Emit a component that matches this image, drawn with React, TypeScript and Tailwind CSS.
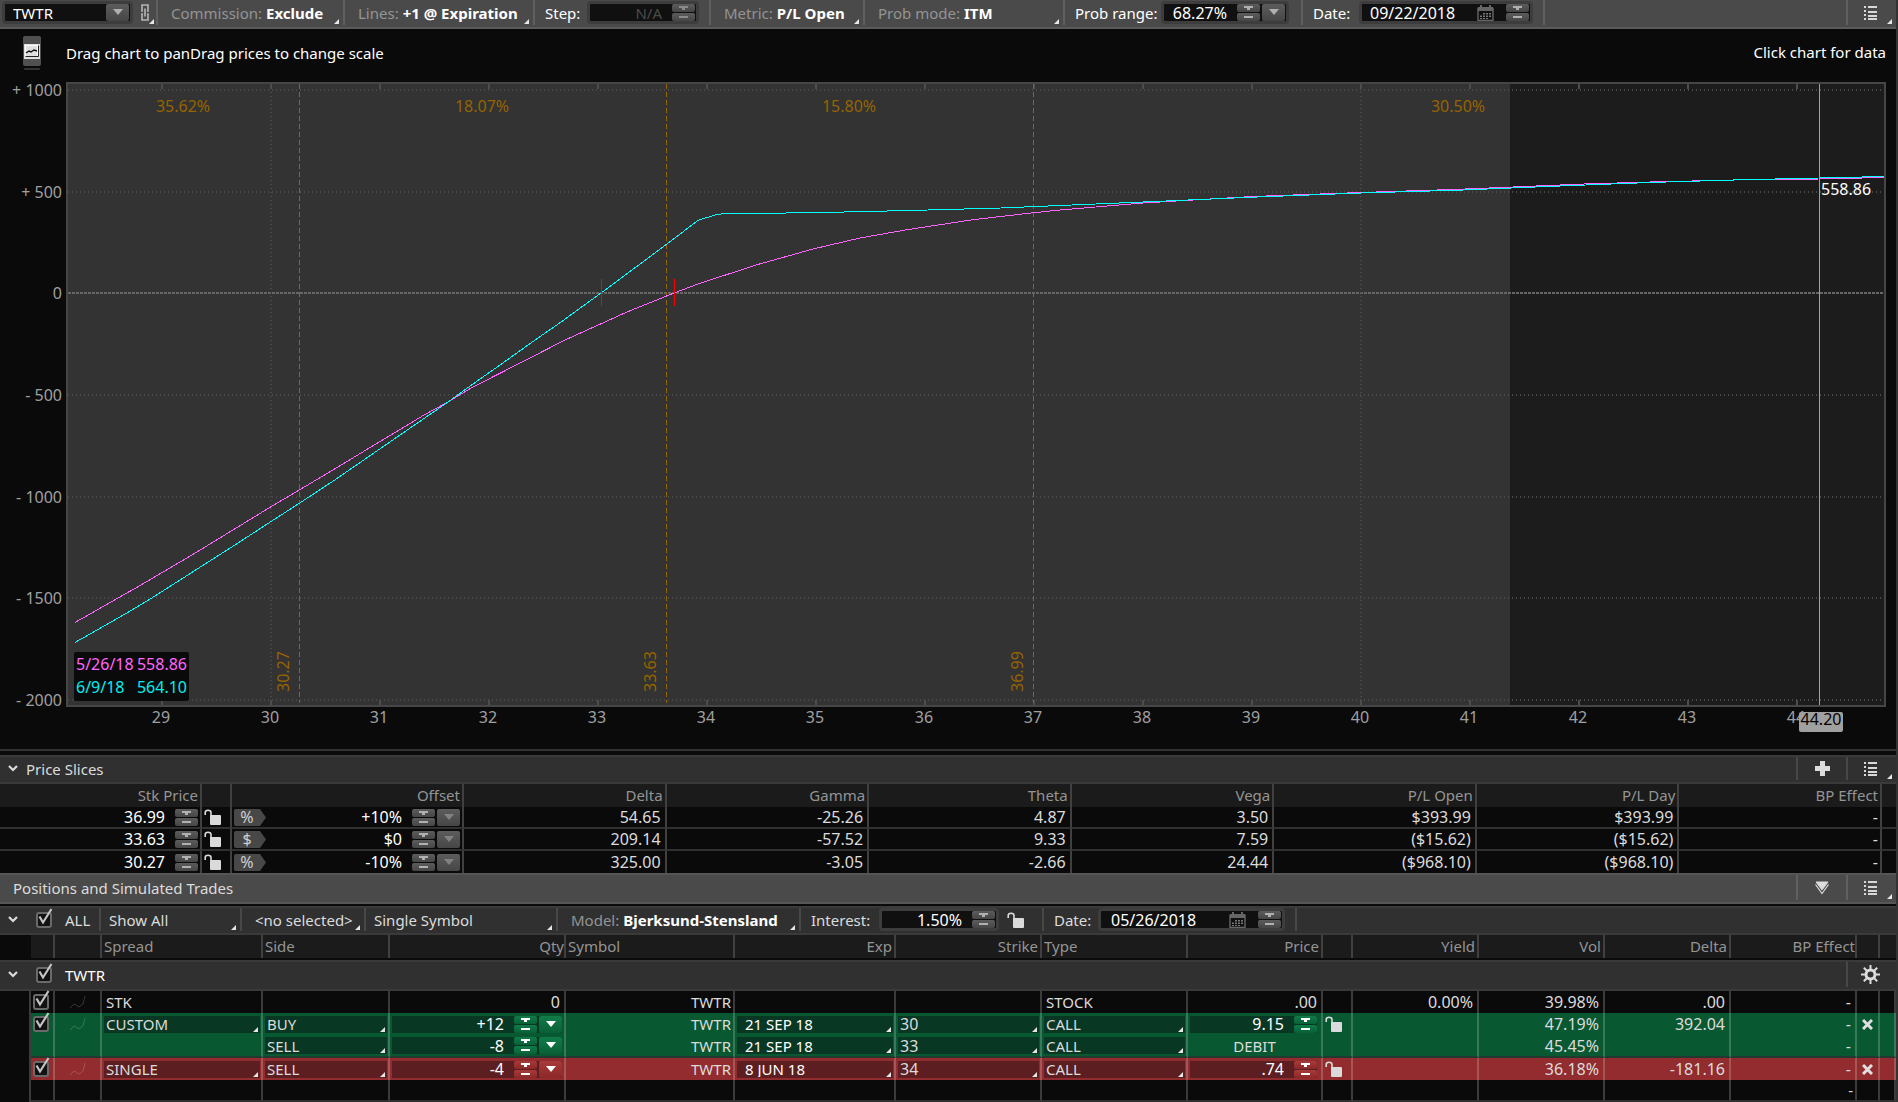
import type { ReactNode } from "react";
import clsx from "clsx";

type Tone = "gray" | "green" | "red";

const strip: Record<Tone, string> = {
  gray: "bg-gradient-to-b from-[#5c5c5c] to-[#464646] text-[#b0b0b0]",
  green: "bg-gradient-to-b from-[#107c48] to-[#0a6038] text-white",
  red: "bg-gradient-to-b from-[#a83a3a] to-[#8c2828] text-white",
};

const Spinner = ({ label, tone = "gray", dim = false }: { label: string; tone?: Tone; dim?: boolean }) => (
  <span className="flex w-[23px] shrink-0 flex-col gap-px">
    <button type="button" aria-label={`Increase ${label}`} className={`flex h-2 justify-center rounded-[2px] ${strip[tone]}`}>
      <svg width="9" height="8" viewBox="0 0 9 8" fill="currentColor" shapeRendering="crispEdges" className={clsx(dim && "opacity-60")}>
        <path d="M0 2h9v2H6v2H3V4H0z" />
      </svg>
    </button>
    <button type="button" aria-label={`Decrease ${label}`} className={`flex h-2 justify-center rounded-[2px] ${strip[tone]}`}>
      <svg width="9" height="8" viewBox="0 0 9 8" fill="currentColor" shapeRendering="crispEdges" className={clsx(dim && "opacity-60")}>
        <path d="M0 3h9v2H0z" />
      </svg>
    </button>
  </span>
);

const DropButton = ({ label, tone = "gray", dim = false }: { label: string; tone?: Tone; dim?: boolean }) => (
  <button
    type="button"
    aria-label={label}
    className={clsx("flex h-[17px] w-[23px] shrink-0 items-center justify-center rounded-[2px]", strip[tone])}
  >
    <svg width="10" height="6" viewBox="0 0 10 6" fill="currentColor" className={clsx("-mt-px", dim && "opacity-50")}>
      <path d="M0 0h10L5 6z" />
    </svg>
  </button>
);

// small white triangle in the lower right corner of everything that opens a menu
const Corner = () => (
  <svg width="5" height="5" viewBox="0 0 5 5" fill="#e6e6e6" className="pointer-events-none mb-px ml-auto shrink-0 self-end">
    <path d="M5 0v5H0z" />
  </svg>
);

const ListIcon = () => (
  <svg width="13" height="14" viewBox="0 0 13 14" fill="#d8d8d8" shapeRendering="crispEdges">
    <path d="M0 0h2v2H0zM4 0h9v2H4zM0 4h2v2H0zM4 5h9v2H4zM0 8h2v2H0zM4 9h9v2H4zM0 12h2v2H0zM4 12h9v2H4z" />
  </svg>
);

const LockIcon = () => (
  <svg width="17" height="16" viewBox="0 0 17 16" fill="none" className="shrink-0">
    <rect x="6" y="6" width="11" height="10" rx="1" fill="#dadada" />
    <path d="M1.2 6V3.6Q1.2 1.2 4 1.2Q7 1.2 7 3.6V7" stroke="#dadada" strokeWidth="1.6" />
  </svg>
);

const CalendarIcon = () => (
  <svg width="17" height="16" viewBox="0 0 17 16" fill="none" className="shrink-0">
    <path d="M1 3.5h15v12H1z" stroke="#666" strokeWidth="1.4" />
    <path d="M1 2h15v4H1zM3 0h2v3H3zM12 0h2v3h-2z" fill="#666" />
    <path d="M6 8h2v1.500H6zM9 8h2v1.500H9zM12 8h2v1.500h-2zM3 10.500h2V12H3zM6 10.500h2V12H6zM9 10.500h2V12H9zM12 10.500h2V12h-2zM3 13h2v1H3zM6 13h2v1H6zM9 13h2v1H9z" fill="#777" />
  </svg>
);

const LinkIcon = () => (
  <svg width="8" height="17" viewBox="0 0 8 17" fill="none" stroke="#b4b4b4" strokeWidth="1.6">
    <path d="M2 7H1V1h6v6H6M2 10H1v6h6v-6H6M4 4.500v8" />
  </svg>
);

const Chevron = () => (
  <svg width="10" height="7" viewBox="0 0 10 7" fill="none" stroke="#dcdcdc" strokeWidth="2.200">
    <path d="M1 1l4 4 4-4" />
  </svg>
);

const CheckBox = ({ label }: { label: string }) => (
  <span className="relative inline-block h-4 w-4 align-top">
    <input
      type="checkbox"
      defaultChecked
      aria-label={label}
      className="block h-full w-full appearance-none rounded-[3px] border-2 border-[#6a6a6a] bg-[#121212]"
    />
    <svg width="17" height="18" viewBox="0 0 17 18" fill="none" className="pointer-events-none absolute -top-1 left-0">
      <path d="M3.500 8.500L7 14.500L15.500 1" stroke="#c4c4c4" strokeWidth="2.200" />
    </svg>
  </span>
);

const TrendIcon = () => (
  <svg width="17" height="14" viewBox="0 0 17 14" fill="none" stroke="#ffffff" strokeOpacity="0.18" className="mx-auto block">
    <path d="M1 13l4-4 2 1 3 2 4-3 2-8" />
  </svg>
);

const Field = ({ className, children }: { className: string; children: ReactNode }) => (
  <div className={clsx("flex h-[23px] shrink-0 items-center rounded-[4px] border-[3px] border-[#3d3d3d] bg-[#101010]", className)}>
    {children}
  </div>
);

const input = "h-4 min-w-0 flex-1 bg-transparent text-white outline-none";
const select = "h-5 min-w-0 flex-1 cursor-pointer appearance-none bg-transparent outline-none";

const MenuSelect = ({ id, label, value, className }: { id: string; label: string; value: string; className: string }) => (
  <div className={clsx("flex shrink-0 items-center border-r-2 border-[#5f5f5f] pr-1", className)}>
    <label htmlFor={id} className="mr-1 text-[#949494]">{label}</label>
    <select id={id} className={clsx(select, "font-bold text-white")}>
      <option>{value}</option>
    </select>
    <Corner />
  </div>
);

const TopBar = () => (
  <div className="flex h-[29px] items-stretch border-b-2 border-[#5a5a5a] bg-[#4a4a4a] pb-0.5 text-white">
    <div className="flex w-[158px] shrink-0 items-center border-r-2 border-[#5f5f5f] pr-1 pl-0.5">
      <Field className="w-[131px] pr-px pl-2">
        <input aria-label="Symbol" defaultValue="TWTR" className={input} />
        <DropButton label="Choose symbol" />
      </Field>
      <button type="button" aria-label="Link symbol" className="ml-2">
        <LinkIcon />
      </button>
      <Corner />
    </div>
    <MenuSelect id="commission" label="Commission:" value="Exclude" className="w-[187px] pl-[13px]" />
    <MenuSelect id="lines" label="Lines:" value="+1 @ Expiration" className="w-[190px] pl-[13px]" />
    <div className="flex w-[176px] shrink-0 items-center border-r-2 border-[#5f5f5f] pr-2.5 pl-2.5">
      <label htmlFor="step" className="mr-auto">Step:</label>
      <Field className="w-[112px] pr-px">
        <input id="step" disabled defaultValue="N/A" className="mr-2.5 h-4 min-w-0 flex-1 bg-transparent text-right text-[#4a4a4a]" />
        <Spinner label="step" dim />
      </Field>
    </div>
    <MenuSelect id="metric" label="Metric:" value="P/L Open" className="w-[154px] pl-[13px]" />
    <MenuSelect id="probMode" label="Prob mode:" value="ITM" className="w-[200px] pl-[13px]" />
    <div className="flex w-[238px] shrink-0 items-center border-r-2 border-[#5f5f5f] pr-3 pl-2.5">
      <label htmlFor="probRange" className="mr-auto">Prob range:</label>
      <Field className="w-[128px] gap-0.5 pr-px pl-2">
        <input id="probRange" defaultValue="68.27%" className={clsx(input, "mr-2 text-right text-base")} />
        <Spinner label="prob range" />
        <DropButton label="Choose prob range" />
      </Field>
    </div>
    <div className="flex w-[242px] shrink-0 items-center border-r-2 border-[#5f5f5f] pr-2.5 pl-2.5">
      <label htmlFor="date" className="mr-auto">Date:</label>
      <Field className="w-[174px] pr-px pl-2">
        <input id="date" defaultValue="09/22/2018" className={clsx(input, "text-base")} />
        <CalendarIcon />
        <span className="w-3" />
        <Spinner label="date" />
      </Field>
    </div>
    <div className="flex-1 border-r-2 border-[#5f5f5f]" />
    <button type="button" aria-label="Chart menu" className="flex w-12 items-center pr-1 pl-4">
      <ListIcon />
      <Corner />
    </button>
  </div>
);

const magenta =
  "75,622.5 104,606 138,586.7 192,555 271,506.7 299.3,490 332,470.5 366,450 424,415 447,402.5 472,387.500 528,359 565,340 627,312 674,293 698,284 757,264.7 813,249 860,238 907,229.7 973,219.7 1033,212.8 1060,210 1143,203 1252,196.5 1361,192.5 1458,189.3 1584,184 1650,182 1735,180 1819,179 1884,177.5";
const cyan =
  "75,642.5 128,612.3 151,598.5 193,571.7 240,541.7 271,521.5 299.3,503.3 334,480.5 400,435 447,402.7 468,387.500 500,365 527,345.7 561,322 601,293 667,244 698,220.3 717,214.4 727,213.5 799,212.9 854,211.8 928,210 1001,208 1060,205.500 1143,202 1252,197.2 1361,193 1458,190.2 1560,186 1650,182.5 1740,179.8 1819,178 1884,176.500";

const priceTicks = [29, 30, 31, 32, 33, 34, 35, 36, 37, 38, 39, 40, 41, 42, 43, 44];
const plTicks = [
  { value: "+ 1000", y: 90 },
  { value: "+ 500", y: 192 },
  { value: "0", y: 293 },
  { value: "- 500", y: 395 },
  { value: "- 1000", y: 497 },
  { value: "- 1500", y: 598 },
  { value: "- 2000", y: 700 },
];
const slices = [
  { value: "30.27", x: 299 },
  { value: "33.63", x: 666 },
  { value: "36.99", x: 1033 },
];
const probabilities = [
  { value: "35.62%", x: 183 },
  { value: "18.07%", x: 482 },
  { value: "15.80%", x: 849 },
  { value: "30.50%", x: 1458 },
];

const tickX = (price: number) => 162 + (price - 29) * 109;

const RiskChart = () => (
  <svg viewBox="0 82 1896 667" className="block w-full" role="img" aria-label="Risk profile">
    <g shapeRendering="crispEdges" fill="none">
      <rect x="68" y="84" width="1442" height="621" fill="#333333" />
      <rect x="1510" y="84" width="375" height="621" fill="#1c1c1c" />
      {plTicks.map((t) => (
        <path key={t.value} d={`M68 ${t.y}H1884`} stroke={t.y === 293 ? "#666666" : "#4a4a4a"} strokeWidth="2" strokeDasharray={t.y === 293 ? "3 1" : "1 3"} />
      ))}
      <path d={`M${tickX(30)} 84V705M${tickX(40)} 84V705`} stroke="#4a4a4a" strokeWidth="2" strokeDasharray="1 3" />
      {priceTicks.map((p) => (
        <path key={p} d={`M${tickX(p)} 84v5M${tickX(p)} 700v5`} stroke="#4d4d4d" strokeWidth="2" />
      ))}
      <rect x="67" y="83" width="1818" height="623" stroke="#464646" strokeWidth="2" />
      {slices.map((s) => (
        <path key={s.value} d={`M${s.x + 0.5} 84V703`} stroke="#966400" strokeDasharray="5 3" />
      ))}
      <polyline points={magenta} stroke="#ff66ff" />
      <polyline points={cyan} stroke="#00ffff" />
      <path d="M601.5 279v27M674.500 279v27" stroke="#ff0000" />
      <path d="M1819.500 84V705" stroke="#a0a0a0" />
    </g>
    <g fontSize="16">
      <g fill="#a0a0a0" textAnchor="end">
        {plTicks.map((t) => (
          <text key={t.value} x="62" y={t.y + 6}>{t.value}</text>
        ))}
      </g>
      <g fill="#a0a0a0" textAnchor="middle">
        {priceTicks.map((p) => (
          <text key={p} x={tickX(p) - 1} y="723">{p}</text>
        ))}
      </g>
      <g fill="#966400" textAnchor="middle">
        {probabilities.map((p) => (
          <text key={p.value} x={p.x} y="112">{p.value}</text>
        ))}
      </g>
      <g fill="#966400">
        {slices.map((s) => (
          <text key={s.value} transform={`translate(${s.x - 10} 692) rotate(-90)`}>{s.value}</text>
        ))}
      </g>
      <text x="1821" y="195" fill="#ffffff">558.86</text>
      <rect x="1799" y="712" width="44" height="20" rx="2" fill="#a0a0a0" />
      <text x="1821" y="725" fill="#000000" textAnchor="middle">44.20</text>
    </g>
    <rect x="74" y="652" width="115" height="49" rx="2" fill="#0a0a0a" />
    <g fontSize="16">
      <g fill="#ff66ff">
        <text x="76" y="670">5/26/18</text>
        <text x="187" y="670" textAnchor="end">558.86</text>
      </g>
      <g fill="#00f0f0">
        <text x="76" y="693">6/9/18</text>
        <text x="187" y="693" textAnchor="end">564.10</text>
      </g>
    </g>
  </svg>
);

const ChartPanel = () => (
  <div>
    <div className="flex h-[53px] items-start justify-between pt-1.5 pr-2.5 pl-[23px] text-white">
      <div className="flex items-center gap-[25px]">
        <svg width="18" height="35" viewBox="0 0 18 35">
          <rect x="0" y="1" width="18" height="30" rx="2" fill="#505050" />
          <rect x="1" y="33" width="16" height="2" rx="1" fill="#333" />
          <rect x="1" y="9" width="16" height="15" fill="#e0e0e0" />
          <rect x="2.500" y="10.500" width="12" height="11" fill="none" stroke="#fff" />
          <path d="M2.500 21.500h13v-11" fill="none" stroke="#222" />
          <path d="M3 18l3-2 2 1 3-2 3 1" fill="none" stroke="#111" strokeWidth="1.500" />
        </svg>
        <span>Drag chart to panDrag prices to change scale</span>
      </div>
      <span className="mt-[7px]">Click chart for data</span>
    </div>
    <RiskChart />
  </div>
);

const priceSlices = [
  { price: "36.99", unit: "%", offset: "+10%", greeks: ["54.65", "-25.26", "4.87", "3.50", "$393.99", "$393.99"] },
  { price: "33.63", unit: "$", offset: "$0", greeks: ["209.14", "-57.52", "9.33", "7.59", "($15.62)", "($15.62)"] },
  { price: "30.27", unit: "%", offset: "-10%", greeks: ["325.00", "-3.05", "-2.66", "24.44", "($968.10)", "($968.10)"] },
];

const line = "border-r-2 border-[#404040]";

const PriceSlices = () => (
  <section className="border-t-2 border-[#333333] pt-1">
    <div className="flex h-[29px] items-stretch border-y-2 border-[#3a3a3a] bg-[#303030] pb-0.5">
      <button type="button" className="flex items-center gap-2 pl-2">
        <Chevron />
        <span>Price Slices</span>
      </button>
      <div className="flex-1 border-r-2 border-[#484848]" />
      <button type="button" aria-label="Add slice" className="flex w-[50px] items-center justify-center border-r-2 border-[#484848]">
        <svg width="15" height="15" viewBox="0 0 15 15" fill="#dcdcdc">
          <path d="M5 0h5v5h5v5h-5v5H5v-5H0V5h5z" />
        </svg>
      </button>
      <button type="button" aria-label="Price slices menu" className="flex w-12 items-center pr-1 pl-4">
        <ListIcon />
        <Corner />
      </button>
    </div>
    <table className="w-full table-fixed border-separate border-spacing-0 text-right leading-4">
      <colgroup>
        <col className="w-[202px]" />
        <col className="w-[30px]" />
        <col className="w-[232px]" />
        <col />
        <col />
        <col />
        <col />
        <col />
        <col />
        <col />
        <col className="w-[14px]" />
      </colgroup>
      <thead>
        <tr className="h-[23px] bg-[#1b1b1b] text-[#949494]">
          {["Stk Price", "", "Offset", "Delta", "Gamma", "Theta", "Vega", "P/L Open", "P/L Day", "BP Effect"].map((h, i) => (
            <th key={i} className={clsx(line, "p-0 pr-0.5 pb-0.5 font-normal")}>{h}</th>
          ))}
          <th className="p-0" />
        </tr>
      </thead>
      <tbody className="text-base leading-4 text-[#dcdcdc]">
        {priceSlices.map((s, i) => {
          const cell = clsx(line, "p-0", i < 2 && "border-b-2 border-b-[#303030]");
          return (
            <tr key={s.price} className="h-[22px]">
              <td className={clsx(cell, "pr-0.5")}>
                <div className="flex items-center justify-end gap-2.5">
                  <input aria-label={`Stock price ${i + 1}`} defaultValue={s.price} className="h-4 w-20 bg-transparent text-right text-white" />
                  <Spinner label={`price ${s.price}`} />
                </div>
              </td>
              <td className={cell}>
                <button type="button" aria-label="Lock slice" className="flex pl-0.5">
                  <LockIcon />
                </button>
              </td>
              <td className={clsx(cell, "pr-0.5")}>
                <div className="flex items-center pl-0.5">
                  <button type="button" className="relative flex h-[17px] w-8 items-center pl-1 text-[#d0d0d0]">
                    <svg width="32" height="17" viewBox="0 0 32 17" className="absolute top-0 left-0">
                      <path d="M2 0h24l6 8.500-6 8.500H2q-2 0-2-2V2q0-2 2-2z" fill="#484848" />
                    </svg>
                    <span className="relative w-[18px] text-center">{s.unit}</span>
                  </button>
                  <input aria-label={`Offset ${i + 1}`} defaultValue={s.offset} className="mr-2.5 h-4 min-w-0 flex-1 bg-transparent text-right text-white" />
                  <div className="flex gap-0.5">
                    <Spinner label={`offset ${s.offset}`} />
                    <DropButton label="Choose offset" dim />
                  </div>
                </div>
              </td>
              {s.greeks.map((g, j) => (
                <td key={j} className={clsx(cell, "pr-1")}>{g}</td>
              ))}
              <td className={clsx(cell, "pr-0.5")}>-</td>
              <td className={clsx("p-0", i < 2 && "border-b-2 border-[#303030]")} />
            </tr>
          );
        })}
      </tbody>
    </table>
  </section>
);

const FilterSelect = ({ label, value, className }: { label: string; value: string; className: string }) => (
  <div className={clsx("flex shrink-0 items-center border-r-2 border-[#484848] pr-1", className)}>
    <select aria-label={label} className={select}>
      <option>{value}</option>
    </select>
    <Corner />
  </div>
);

const FilterBar = () => (
  <div className="flex h-[29px] items-stretch border-y-2 border-[#3a3a3a] bg-[#303030] pb-0.5 text-[#dcdcdc]">
    <div className="flex w-[101px] shrink-0 items-center border-r-2 border-[#484848] pl-2">
      <button type="button" aria-label="Collapse all">
        <Chevron />
      </button>
      <span className="ml-[18px] flex">
        <CheckBox label="All positions" />
      </span>
      <span className="ml-[13px]">ALL</span>
    </div>
    <FilterSelect label="Show" value="Show All" className="w-[141px] pl-2" />
    <FilterSelect label="Group" value="<no selected>" className="w-[124px] pl-[13px]" />
    <FilterSelect label="Symbols" value="Single Symbol" className="w-[192px] pl-2" />
    <div className="flex w-[243px] shrink-0 items-center border-r-2 border-[#484848] pr-1 pl-[13px]">
      <label htmlFor="model" className="mr-1 text-[#949494]">Model:</label>
      <select id="model" className={clsx(select, "font-bold text-white")}>
        <option>Bjerksund-Stensland</option>
      </select>
      <Corner />
    </div>
    <div className="flex w-[243px] shrink-0 items-center border-r-2 border-[#484848] pr-[18px] pl-2.5">
      <label htmlFor="interest" className="mr-auto">Interest:</label>
      <Field className="mr-2 w-[120px] pr-px">
        <input id="interest" defaultValue="1.50%" className={clsx(input, "mr-2.5 text-right text-base")} />
        <Spinner label="interest" />
      </Field>
      <button type="button" aria-label="Lock interest">
        <LockIcon />
      </button>
    </div>
    <div className="flex w-[253px] shrink-0 items-center border-r-2 border-[#484848] pr-2.5 pl-2.5">
      <label htmlFor="simDate" className="mr-auto">Date:</label>
      <Field className="w-[187px] pr-px pl-2.5">
        <input id="simDate" defaultValue="05/26/2018" className={clsx(input, "text-base")} />
        <CalendarIcon />
        <span className="w-3" />
        <Spinner label="simulation date" />
      </Field>
    </div>
  </div>
);

const box: Record<Tone, string> = {
  gray: "",
  green: "bg-[#083824]",
  red: "bg-[#5c1e20]",
};

const Picker = ({ label, value, tone, inset = false }: { label: string; value: string; tone: Tone; inset?: boolean }) => (
  <div className={clsx("mr-px ml-0.5 flex h-[17px] items-center pr-0.5", inset ? "pl-2" : "pl-0.5", box[tone])}>
    <select aria-label={label} className={clsx(select, inset && "text-white")}>
      <option>{value}</option>
    </select>
    <Corner />
  </div>
);

const positionLegs = [
  { tone: "green", first: true, spread: "CUSTOM", side: "BUY", qty: "+12", exp: "21 SEP 18", strike: "30", price: "9.15", vol: "47.19%", delta: "392.04" },
  { tone: "green", first: false, spread: "", side: "SELL", qty: "-8", exp: "21 SEP 18", strike: "33", price: "", vol: "45.45%", delta: "" },
  { tone: "red", first: true, spread: "SINGLE", side: "SELL", qty: "-4", exp: "8 JUN 18", strike: "34", price: ".74", vol: "36.18%", delta: "-181.16" },
] as const;

const columns = [
  { title: "", align: "text-left" },
  { title: "", align: "text-left" },
  { title: "Spread", align: "text-left" },
  { title: "Side", align: "text-left" },
  { title: "Qty", align: "text-right" },
  { title: "Symbol", align: "text-left" },
  { title: "Exp", align: "text-right pr-0.5" },
  { title: "Strike", align: "text-right pr-0.5" },
  { title: "Type", align: "text-left" },
  { title: "Price", align: "text-right pr-0.5" },
  { title: "", align: "text-left" },
  { title: "Yield", align: "text-right pr-0.5" },
  { title: "Vol", align: "text-right pr-0.5" },
  { title: "Delta", align: "text-right pr-0.5" },
  { title: "BP Effect", align: "text-right" },
  { title: "", align: "text-left" },
];

const bar = "border-r-2 border-white/20 p-0";
const num = "pr-1 text-right text-base leading-4";

const Positions = () => (
  <table className="w-full table-fixed border-separate border-spacing-0 text-left leading-4 text-[#dcdcdc]">
    <colgroup>
      <col className="w-[31px]" />
      <col className="w-[24px]" />
      <col className="w-[47px]" />
      <col className="w-[161px]" />
      <col className="w-[127px]" />
      <col className="w-[176px]" />
      <col />
      <col className="w-[161px]" />
      <col className="w-[146px]" />
      <col className="w-[146px]" />
      <col className="w-[135px]" />
      <col className="w-[30px]" />
      <col className="w-[126px]" />
      <col className="w-[126px]" />
      <col className="w-[126px]" />
      <col className="w-[126px]" />
      <col className="w-[23px]" />
      <col className="w-[16px]" />
    </colgroup>
    <thead>
      <tr className="h-[23px] text-[#949494]">
        <th className="p-0" />
        {columns.map((c, i) => (
          <th key={i} className={clsx(line, "bg-[#1b1b1b] p-0 pb-0.5 pl-0.5 font-normal", c.align)}>{c.title}</th>
        ))}
        <th className="bg-[#1b1b1b] p-0" />
      </tr>
    </thead>
    <tbody>
      <tr>
        <td colSpan={18} className="p-0 pt-0.5">
          <div className="flex h-[31px] items-stretch border-y-2 border-[#3a3a3a] bg-[#303030] pb-0.5 text-white">
            <div className="flex items-center pl-2">
              <button type="button" aria-label="Collapse TWTR">
                <Chevron />
              </button>
              <span className="ml-[18px] flex">
                <CheckBox label="TWTR" />
              </span>
              <span className="ml-[13px]">TWTR</span>
            </div>
            <div className="flex-1 border-r-2 border-[#484848]" />
            <button type="button" aria-label="Settings" className="flex w-12 items-center justify-center pr-1">
              <svg width="19" height="19" viewBox="0 0 19 19" fill="none" stroke="#dcdcdc">
                <circle cx="9.500" cy="9.500" r="4.500" strokeWidth="3" />
                <path d="M9.500 0v4M9.500 15v4M0 9.500h4M15 9.500h4M2.800 2.800l3 3M13.200 13.200l3 3M2.800 16.200l3-3M13.200 5.800l3-3" strokeWidth="2" />
              </svg>
            </button>
          </div>
        </td>
      </tr>
      <tr className="h-[22px]">
        <td className={bar} />
        <td className={clsx(bar, "pl-0.5")}><CheckBox label="STK" /></td>
        <td className={bar}><TrendIcon /></td>
        <td className={clsx(bar, "pl-1")}>STK</td>
        <td className={bar} />
        <td className={clsx(bar, num)}>0</td>
        <td className={clsx(bar, "pr-0.5 text-right")}>TWTR</td>
        <td className={bar} />
        <td className={bar} />
        <td className={clsx(bar, "pl-1")}>STOCK</td>
        <td className={clsx(bar, num)}>.00</td>
        <td className={bar} />
        <td className={clsx(bar, num)}>0.00%</td>
        <td className={clsx(bar, num)}>39.98%</td>
        <td className={clsx(bar, num)}>.00</td>
        <td className={clsx(bar, num)}>-</td>
        <td className={bar} />
        <td className={bar} />
      </tr>
      {positionLegs.map((leg, i) => {
        const cell = clsx(bar, i === 1 && "border-b-2 border-b-[#243a30]");
        return (
          <tr key={i} className={clsx(i === 1 ? "h-[23px]" : "h-[22px]", leg.tone === "green" ? "bg-[#085832]" : "bg-[#922c2e]")}>
            <td className="border-r-2 border-white/20 bg-[#0a0a0a] p-0" />
            <td className={clsx(cell, "pl-0.5")}>{leg.first && <CheckBox label={leg.spread} />}</td>
            <td className={cell}>{leg.first && <TrendIcon />}</td>
            <td className={cell}>{leg.spread && <Picker label="Spread" value={leg.spread} tone={leg.tone} />}</td>
            <td className={cell}><Picker label="Side" value={leg.side} tone={leg.tone} /></td>
            <td className={cell}>
              <div className={clsx("mr-0.5 ml-0.5 flex items-center gap-0.5", box[leg.tone])}>
                <input aria-label="Quantity" defaultValue={leg.qty} className={clsx(input, "mr-2 text-right text-base")} />
                <Spinner label="quantity" tone={leg.tone} />
                <DropButton label="Choose quantity" tone={leg.tone} />
              </div>
            </td>
            <td className={clsx(cell, "pr-0.5 text-right")}>TWTR</td>
            <td className={cell}><Picker label="Expiration" value={leg.exp} tone={leg.tone} inset /></td>
            <td className={clsx(cell, "text-base leading-4")}><Picker label="Strike" value={leg.strike} tone={leg.tone} /></td>
            <td className={cell}><Picker label="Type" value="CALL" tone={leg.tone} /></td>
            <td className={cell}>
              {leg.first ? (
                <div className={clsx("mr-1 ml-0.5 flex items-center", box[leg.tone])}>
                  <input aria-label="Price" defaultValue={leg.price} className={clsx(input, "mr-2.5 text-right text-base")} />
                  <Spinner label="price" tone={leg.tone} />
                </div>
              ) : (
                <div className="text-center">DEBIT</div>
              )}
            </td>
            <td className={cell}>
              {leg.first && (
                <button type="button" aria-label="Lock price" className="flex pl-0.5">
                  <LockIcon />
                </button>
              )}
            </td>
            <td className={cell} />
            <td className={clsx(cell, num)}>{leg.vol}</td>
            <td className={clsx(cell, num)}>{leg.delta}</td>
            <td className={clsx(cell, num)}>-</td>
            <td className={cell}>
              {leg.first && (
                <button type="button" aria-label="Remove" className="mx-auto flex">
                  <svg width="11" height="11" viewBox="0 0 11 11" stroke="#e0e0e0" strokeWidth="3">
                    <path d="M1 1l9 9M10 1l-9 9" />
                  </svg>
                </button>
              )}
            </td>
            <td className={cell} />
          </tr>
        );
      })}
      <tr className="h-[22px]">
        <td className={bar} />
        {Array.from({ length: 17 }, (_, i) => (
          <td key={i} className={clsx(bar, "border-b-2 border-b-[#303030] pr-0.5 text-right")}>{i === 14 ? "-" : ""}</td>
        ))}
      </tr>
    </tbody>
  </table>
);

const App = () => (
  <main className="min-h-screen overflow-hidden border-r-2 border-[#333333] bg-[#0a0a0a] font-['Noto_Sans',sans-serif] text-[15px] leading-5 text-[#dcdcdc]">
    <TopBar />
    <ChartPanel />
    <PriceSlices />
    <section>
      <div className="flex h-[31px] items-stretch border-y-2 border-[#565656] bg-[#4a4a4a] pb-0.5">
        <h2 className="flex flex-1 items-center border-r-2 border-[#606060] pl-[13px]">Positions and Simulated Trades</h2>
        <button type="button" aria-label="Collapse positions" className="flex w-[50px] items-center justify-center border-r-2 border-[#606060]">
          <svg width="14" height="14" viewBox="0 0 14 14" fill="none" stroke="#dcdcdc">
            <path d="M1 1h12L7 9z" fill="#dcdcdc" />
            <path d="M0.500 3.500L7 12.500L13.500 3.500" strokeWidth="1.200" />
          </svg>
        </button>
        <button type="button" aria-label="Positions menu" className="flex w-12 items-center pr-1 pl-4">
          <ListIcon />
          <Corner />
        </button>
      </div>
      <div className="pt-0.5">
        <FilterBar />
        <Positions />
      </div>
    </section>
  </main>
);

export default App;
